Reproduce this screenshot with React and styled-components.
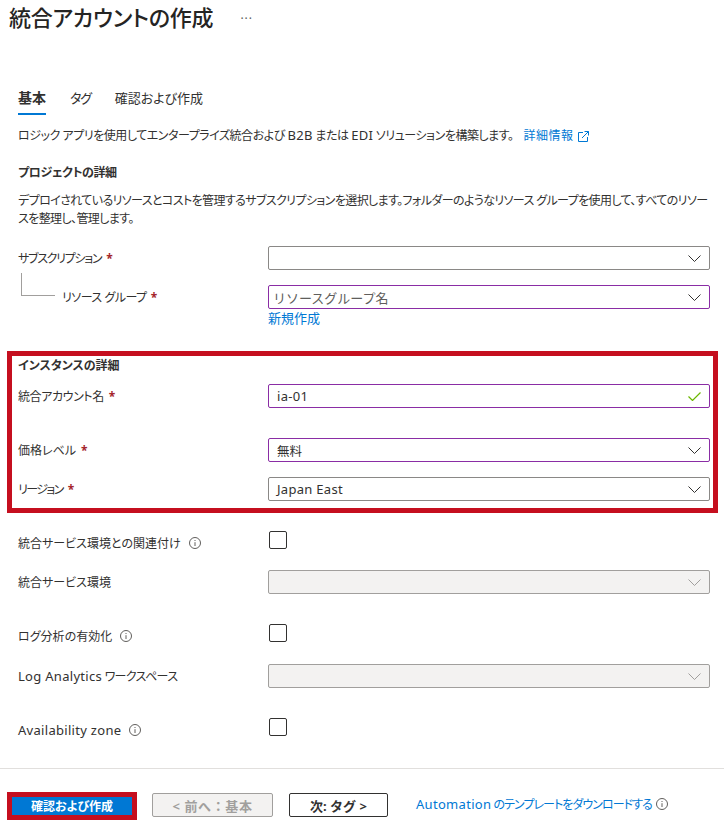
import React from 'react';
import styled, { createGlobalStyle } from 'styled-components';

const GlobalStyle = createGlobalStyle`
    body {
        margin: 0;
        background: #ffffff;
        color: #323130;
        font-family: "Noto Sans", "Noto Sans CJK JP", sans-serif;
        font-size: 12px;
        font-feature-settings: "palt";
    }
`;

const Page = styled.div`
    width: 724px;
    height: 823px;
    overflow: hidden;
`;
const Header = styled.header`
    display: flex;
    align-items: center;
    height: 36px;
    padding-left: 9px;
`;
const Title = styled.h1`
    margin: -2px 0 0;
    font-size: 22px;
    font-weight: 500;
    line-height: 36px;
    letter-spacing: -0.2px;
    color: #252423;
`;
const HeaderMore = styled.span`
    margin-left: 27px;
    font-size: 12px;
    letter-spacing: 1px;
    color: #605e5c;
`;
const Form = styled.main`
    padding-left: 18px;
`;
const Tabs = styled.nav`
    display: flex;
    gap: 24px;
    margin-top: 49px;
`;
const Tab = styled.span`
    height: 28px;
    line-height: 26px;
    font-size: ${(p) => (p.$active ? 14 : 13)}px;
    font-weight: ${(p) => (p.$active ? 700 : 400)};
    letter-spacing: ${(p) => p.$spacing || 0}px;
    border-bottom: 2px solid ${(p) => (p.$active ? '#0078d4' : 'transparent')};
`;
const Latin = styled.span`
    font-size: 13px;
    letter-spacing: 0.3px;
`;
const Intro = styled.p`
    height: 16px;
    margin: 12px 0 0;
    line-height: 16px;
    letter-spacing: -0.46px;
`;
const Link = styled.a`
    color: #0078d4;
`;
const IntroLink = styled(Link)`
    display: inline-flex;
    align-items: center;
    gap: 4px;
    margin-left: 10px;
    letter-spacing: 0.5px;
`;
const SectionTitle = styled.h2`
    margin: ${(p) => p.$top}px 0 0;
    font-size: 12px;
    font-weight: 700;
    line-height: 16px;
    letter-spacing: ${(p) => p.$spacing || 0}px;
`;
const Description = styled.p`
    width: 692px;
    margin: 11px 0 0;
    line-height: 18px;
    letter-spacing: -0.6px;
`;
const Row = styled.div`
    display: grid;
    grid-template-columns: 250px 442px;
    margin-top: ${(p) => p.$top}px;
`;
const Label = styled.label`
    display: flex;
    align-items: center;
    height: 24px;
    gap: 5px;
`;
const LabelText = styled.span`
    letter-spacing: ${(p) => p.$spacing || 0}px;
`;
const CheckLabel = styled(Label)`
    height: 18px;
    padding-top: 3px;
`;
const Required = styled.span`
    color: #a4262c;
    font-weight: 700;
`;
const TreeLabel = styled.div`
    display: flex;
    align-items: center;
    height: 24px;
    gap: 4px;
`;
const TreeLine = styled.span`
    flex: none;
    width: 33px;
    height: 22px;
    margin: -25px 3px 0 3px;
    border-left: 1px solid #a19f9d;
    border-bottom: 1px solid #a19f9d;
`;
const Field = styled.div`
    display: flex;
    align-items: center;
    justify-content: space-between;
    box-sizing: border-box;
    height: 24px;
    padding: 0 8px;
    border-radius: 2px;
    border: 1px solid ${(p) => (p.$dirty ? '#8a2da5' : p.$disabled ? '#a19f9d' : '#8a8886')};
    background: ${(p) => (p.$disabled ? '#f3f2f1' : '#ffffff')};
    font-size: 12.5px;
`;
const Placeholder = styled.span`
    margin-left: -4px;
    font-size: 13px;
    font-feature-settings: normal;
    color: #605e5c;
`;
const Checkbox = styled.span`
    display: block;
    box-sizing: border-box;
    width: 18px;
    height: 18px;
    margin-left: 1px;
    border: 1px solid #323130;
    border-radius: 2px;
`;
const NewLink = styled(Link)`
    display: block;
    font-size: 13px;
    line-height: 16px;
`;
const InstanceBox = styled.section`
    box-sizing: border-box;
    width: 711px;
    height: 162px;
    margin: 25px 0 0 -11px;
    padding: 2px 0 0 6px;
    border: 5px solid #c50f1f;
`;
const Divider = styled.hr`
    margin: 29px 0 0;
    border: 0;
    border-top: 1px solid #e1dfdd;
`;
const Footer = styled.footer`
    display: flex;
    align-items: center;
    height: 28px;
    padding: 23px 0 0 7px;
`;
const PrimaryButton = styled.button`
    box-sizing: border-box;
    width: 130px;
    height: 28px;
    padding: 0;
    border: 5px solid #c50f1f;
    background: #0078d4;
    color: #ffffff;
    font: inherit;
    font-weight: 700;
`;
const FooterButton = styled.button`
    box-sizing: border-box;
    width: ${(p) => p.$width}px;
    height: 24px;
    margin: 0 0 2px ${(p) => p.$left}px;
    padding: 0;
    border-radius: 2px;
    border: 1px solid ${(p) => (p.disabled ? '#a19f9d' : '#323130')};
    background: ${(p) => (p.disabled ? '#f3f2f1' : '#ffffff')};
    color: ${(p) => (p.disabled ? '#a19f9d' : '#323130')};
    font: inherit;
    font-size: 13px;
    font-weight: 700;
    font-feature-settings: normal;
    letter-spacing: ${(p) => (p.disabled ? 0.6 : 0)}px;
`;
const FooterLink = styled(Link)`
    display: flex;
    align-items: center;
    gap: 4px;
    margin: 0 0 4px 28px;
    letter-spacing: -0.95px;
`;
const InfoWrap = styled.span`
    display: inline-flex;
    margin-left: 3px;
`;

const Chevron = ({ disabled }) => (
    <svg width="13" height="7" viewBox="0 0 13 7" fill="none" stroke={disabled ? '#a19f9d' : '#323130'} strokeWidth="1">
        <path d="M0.5 0.5 L6.5 6.5 L12.5 0.5" />
    </svg>
);

const Check = () => (
    <svg width="13" height="9" viewBox="0 0 13 9" fill="none" stroke="#6bb700" strokeWidth="1.2">
        <path d="M0.5 4.5 L4.5 8.5 L12.5 0.5" />
    </svg>
);

const Info = () => (
    <svg width="12" height="12" viewBox="0 0 12 12" fill="none" stroke="#605e5c" strokeWidth="1">
        <circle cx="6" cy="6" r="5.5" />
        <path d="M6 5.2 V9" />
        <path d="M6 3 V4" />
    </svg>
);

const ExternalLink = () => (
    <svg width="11" height="11" viewBox="0 0 11 11" fill="none" stroke="#0078d4" strokeWidth="1">
        <path d="M5 1.5 H0.5 V10.5 H9.5 V6" />
        <path d="M4 7 L10.5 0.5 M6.5 0.5 H10.5 V4.5" />
    </svg>
);

const FieldLabel = ({ children, spacing }) => (
    <Label>
        <LabelText $spacing={spacing}>{children}</LabelText>
        <Required>*</Required>
    </Label>
);

const App = () => (
    <Page>
        <GlobalStyle />
        <Header>
            <Title>統合アカウントの作成</Title>
            <HeaderMore>···</HeaderMore>
        </Header>
        <Form>
            <Tabs>
                <Tab $active>基本</Tab>
                <Tab $spacing={-1.2}>タグ</Tab>
                <Tab>確認および作成</Tab>
            </Tabs>
            <Intro>
                ロジック アプリを使用してエンタープライズ統合および <Latin>B2B</Latin> または <Latin>EDI</Latin> ソリューションを構築します。
                <IntroLink>詳細情報 <ExternalLink /></IntroLink>
            </Intro>
            <SectionTitle $top={22} $spacing={-0.4}>プロジェクトの詳細</SectionTitle>
            <Description>
                デプロイされているリソースとコストを管理するサブスクリプションを選択します。フォルダーのようなリソース グループを使用して、すべてのリソースを整理し、管理します。
            </Description>
            <Row $top={18}>
                <FieldLabel spacing={-1.3}>サブスクリプション</FieldLabel>
                <Field><span /><Chevron /></Field>
            </Row>
            <Row $top={15}>
                <TreeLabel>
                    <TreeLine />
                    <LabelText $spacing={-0.5}>リソース グループ</LabelText>
                    <Required>*</Required>
                </TreeLabel>
                <Field $dirty><Placeholder>リソースグループ名</Placeholder><Chevron /></Field>
            </Row>
            <Row $top={1}>
                <span />
                <NewLink>新規作成</NewLink>
            </Row>
            <InstanceBox>
                <SectionTitle $top={0}>インスタンスの詳細</SectionTitle>
                <Row $top={10}>
                    <FieldLabel spacing={-0.4}>統合アカウント名</FieldLabel>
                    <Field $dirty><Latin>ia-01</Latin><Check /></Field>
                </Row>
                <Row $top={30}>
                    <FieldLabel>価格レベル</FieldLabel>
                    <Field $dirty>無料<Chevron /></Field>
                </Row>
                <Row $top={15}>
                    <FieldLabel spacing={-1.6}>リージョン</FieldLabel>
                    <Field><Latin>Japan East</Latin><Chevron /></Field>
                </Row>
            </InstanceBox>
            <Row $top={18}>
                <CheckLabel>統合サービス環境との関連付け<InfoWrap><Info /></InfoWrap></CheckLabel>
                <Checkbox />
            </Row>
            <Row $top={18}>
                <Label>統合サービス環境</Label>
                <Field $disabled><span /><Chevron disabled /></Field>
            </Row>
            <Row $top={30}>
                <CheckLabel>ログ分析の有効化<InfoWrap><Info /></InfoWrap></CheckLabel>
                <Checkbox />
            </Row>
            <Row $top={19}>
                <Label><LabelText $spacing={-0.6}><Latin>Log Analytics</Latin> ワークスペース</LabelText></Label>
                <Field $disabled><span /><Chevron disabled /></Field>
            </Row>
            <Row $top={30}>
                <CheckLabel><Latin>Availability zone</Latin><InfoWrap><Info /></InfoWrap></CheckLabel>
                <Checkbox />
            </Row>
        </Form>
        <Divider />
        <Footer>
            <PrimaryButton>確認および作成</PrimaryButton>
            <FooterButton disabled $width={121} $left={15}>&lt; 前へ：基本</FooterButton>
            <FooterButton $width={99} $left={16}>次: タグ &gt;</FooterButton>
            <FooterLink><span><Latin>Automation</Latin> のテンプレートをダウンロードする</span><Info /></FooterLink>
        </Footer>
    </Page>
);

export default App;
